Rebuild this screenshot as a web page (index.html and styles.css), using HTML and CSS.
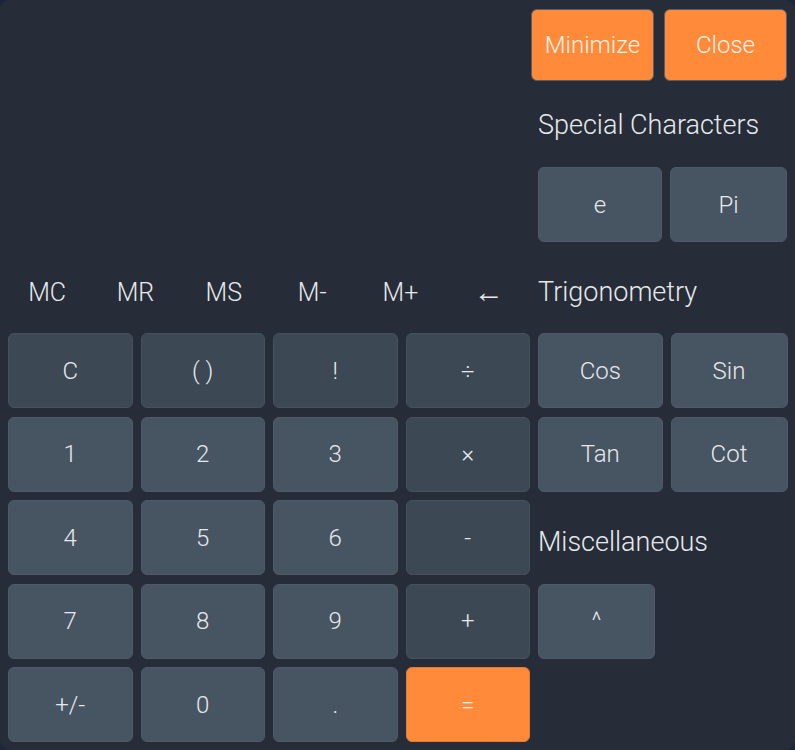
FILE: index.html
```html
<!DOCTYPE html>
<html>
<head>
<meta charset="utf-8">
<link rel="stylesheet" href="styles.css">
</head>
<body>
<div class="app">
  <div class="top">
    <div class="display"></div>
    <div class="side">
      <div class="win-btns">
        <button class="btn orange win">Minimize</button>
        <button class="btn orange win">Close</button>
      </div>
      <div class="label special">Special Characters</div>
      <div class="pair">
        <button class="btn light w124">e</button>
        <button class="btn light w117">Pi</button>
      </div>
    </div>
  </div>
  <div class="mid">
    <div class="mem">
      <span>MC</span><span>MR</span><span>MS</span><span>M-</span><span>M+</span><span class="arrow">&#8592;</span>
    </div>
    <div class="label trig">Trigonometry</div>
  </div>
  <div class="keys">
    <button class="btn dark">C</button>
    <button class="btn dark">( )</button>
    <button class="btn dark">!</button>
    <button class="btn dark">÷</button>
    <button class="btn light">Cos</button>
    <button class="btn light">Sin</button>

    <button class="btn light">1</button>
    <button class="btn light">2</button>
    <button class="btn light">3</button>
    <button class="btn dark">×</button>
    <button class="btn light">Tan</button>
    <button class="btn light">Cot</button>

    <button class="btn light">4</button>
    <button class="btn light">5</button>
    <button class="btn light">6</button>
    <button class="btn dark">-</button>
    <div class="label misc">Miscellaneous</div>

    <button class="btn light">7</button>
    <button class="btn light">8</button>
    <button class="btn light">9</button>
    <button class="btn dark">+</button>
    <button class="btn light caret">^</button>
    <div></div>

    <button class="btn light">+/-</button>
    <button class="btn light">0</button>
    <button class="btn light">.</button>
    <button class="btn orange">=</button>
  </div>
</div>
</body>
</html>
```
FILE: styles.css
```css
html {
  background: #1d2538;
}
body {
  margin: 0;
  width: 795px;
  height: 750px;
  font-family: "Roboto", "Liberation Sans", sans-serif;
  font-weight: 300;
  color: #e6e9ec;
}
.app {
  box-sizing: border-box;
  width: 795px;
  height: 750px;
  padding: 8px 8px 0 8px;
  background: #262d38;
  border-radius: 10px;
  overflow: hidden;
}
.btn {
  box-sizing: border-box;
  font-family: inherit;
  font-weight: 300;
  font-size: 24px;
  color: #e6e9ec;
  border: 1px solid #4e5a67;
  border-radius: 6px;
  padding: 0;
  height: 75px;
  display: flex;
  align-items: center;
  justify-content: center;
}
.light {
  background: #475462;
}
.dark {
  background: #3c4854;
  border-color: #45515d;
}
.orange {
  background: #ff8a3a;
  border-color: #e07c3a;
  color: #fff3ea;
}
.top {
  display: flex;
  height: 242px;
}
.display {
  width: 522px;
}
.side {
  width: 257px;
  display: flex;
  flex-direction: column;
}
.win-btns {
  display: flex;
  gap: 10px;
  margin: 1px 0 0 1px;
}
.win {
  width: 123px;
  height: 72px;
  border-color: #5b5f66;
}
.label {
  font-size: 27px;
  line-height: 30px;
  white-space: nowrap;
}
.special {
  margin: 29px 0 0 8px;
}
.pair {
  display: flex;
  gap: 8px;
  margin: 27px 0 0 8px;
}
.w124 { width: 124px; }
.w117 { width: 117px; }
.mid {
  display: flex;
  align-items: center;
  height: 83px;
}
.mem {
  width: 530px;
  margin: 3px 0 0 -5px;
  display: grid;
  grid-template-columns: repeat(6, 1fr);
  align-items: center;
  font-size: 25px;
  line-height: 30px;
  text-align: center;
}
.arrow {
  font-size: 30px;
  font-weight: 400;
  line-height: 30px;
  position: relative;
  top: -1px;
}
.trig {
  margin-left: 5px;
}
.keys {
  display: grid;
  grid-template-columns: repeat(5, 124.5px) 117px;
  grid-auto-rows: 75px;
  column-gap: 8px;
  row-gap: 8.5px;
}
.misc {
  grid-column: span 2;
  align-self: center;
  margin-top: 8px;
}
.caret {
  width: 117px;
}
```
